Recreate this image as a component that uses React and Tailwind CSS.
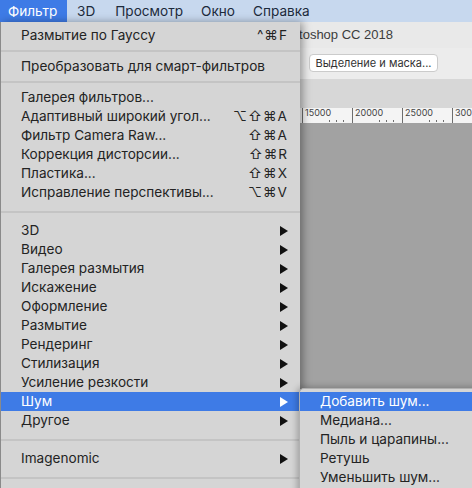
import React from 'react';

const font = { fontFamily: 'Inter, "Noto Sans", "DejaVu Sans", sans-serif' };

const Arrow = ({ white }) => (
  <svg viewBox="0 0 8 10" className="w-[8px] h-[10px]">
    <path d="M0 0 L8 5 L0 10 Z" fill={white ? '#ffffff' : '#111111'} />
  </svg>
);

const Item = ({ label, shortcut, sub, active }) => (
  <div
    className={`h-[19px] flex items-center justify-between pl-[20px] pr-[12px] text-[13.6px] ${
      active ? 'bg-[#3e7be6] text-white' : 'text-[#232323]'
    }`}
  >
    <span className="whitespace-nowrap">{label}</span>
    {shortcut && <span className="tracking-[1px] whitespace-nowrap">{shortcut}</span>}
    {sub && <Arrow white={active} />}
  </div>
);

const Sep = ({ tall }) => (
  <div className={`${tall ? 'h-[19px]' : 'h-[12px]'} flex items-center`}>
    <div className="w-full h-[2px] bg-[#c4c4c4]" />
  </div>
);

const SubItem = ({ label, active }) => (
  <div
    className={`h-[19px] flex items-center pl-[20px] text-[13.6px] whitespace-nowrap ${
      active ? 'bg-[#3e7be6] text-white' : 'text-[#232323]'
    }`}
  >
    {label}
  </div>
);

const RulerSeg = ({ label }) => (
  <div className="w-[50px] shrink-0 h-full border-l border-[#6e6e6e] flex flex-col justify-between pl-[2px]">
    <span className="text-[9px] leading-[10px] text-[#444]">{label}</span>
    <div className="flex gap-[6px] pl-[24px] pb-[1px]">
      <div className="w-px h-[2px] bg-[#6e6e6e]" />
      <div className="w-px h-[2px] bg-[#6e6e6e]" />
      <div className="w-px h-[2px] bg-[#6e6e6e]" />
    </div>
  </div>
);

export default function App() {
  return (
    <div className="relative w-[472px] h-[488px] overflow-hidden bg-[#a2a2a2]" style={font}>
      {/* menu bar */}
      <div className="h-[22px] flex items-center bg-[#c7d8ee] text-[13.6px] text-[#1d2a3b]">
        <div className="h-full flex items-center pl-[8px] w-[67px] bg-[#3e7be6] text-white">Фильтр</div>
        <span className="ml-[10px]">3D</span>
        <span className="ml-[20px]">Просмотр</span>
        <span className="ml-[18px]">Окно</span>
        <span className="ml-[18px]">Справка</span>
      </div>

      {/* app window behind the menu */}
      <div className="flex flex-col h-[466px]">
        <div className="h-[26px] bg-[#e9e9e9] flex items-center pl-[300px]">
          <div className="w-[93px] overflow-hidden flex justify-end">
            <span className="whitespace-nowrap text-[13px] text-[#3c3c3c] font-['Liberation_Sans',sans-serif]">
              Adobe Photoshop CC 2018
            </span>
          </div>
        </div>
        <div className="h-[31px] bg-[#ececec] pl-[309px] pt-[6px]">
          <div className="w-[129px] h-[18px] rounded-[4px] bg-white border border-[#cbcbcb] flex items-center justify-center text-[11px] text-[#333]">
            Выделение и маска...
          </div>
        </div>
        <div className="h-[29px] bg-[#d7d7d7]" />
        <div className="h-[15px] bg-[#f4f4f4] flex pl-[302px] overflow-hidden">
          <RulerSeg label="15000" />
          <RulerSeg label="20000" />
          <RulerSeg label="25000" />
          <div className="w-[20px] shrink-0 h-full border-l border-[#6e6e6e] pl-[2px] overflow-hidden">
            <span className="text-[9px] leading-[10px] text-[#444] block">300</span>
          </div>
        </div>
        <div className="flex-1 bg-[#a2a2a2]" />
      </div>

      {/* Filter menu */}
      <div className="absolute left-0 top-[22px] w-[300px] h-[470px] bg-[#d5d5d5] border-l border-[#8a8a8a] pt-[4px] shadow-[3px_0_8px_rgba(0,0,0,0.35)]">
        <Item label="Размытие по Гауссу" shortcut="^⌘F" />
        <Sep />
        <Item label="Преобразовать для смарт-фильтров" />
        <Sep />
        <Item label="Галерея фильтров..." />
        <Item label="Адаптивный широкий угол..." shortcut="⌥⇧⌘A" />
        <Item label="Фильтр Camera Raw..." shortcut="⇧⌘A" />
        <Item label="Коррекция дисторсии..." shortcut="⇧⌘R" />
        <Item label="Пластика..." shortcut="⇧⌘X" />
        <Item label="Исправление перспективы..." shortcut="⌥⌘V" />
        <Sep tall />
        <Item label="3D" sub />
        <Item label="Видео" sub />
        <Item label="Галерея размытия" sub />
        <Item label="Искажение" sub />
        <Item label="Оформление" sub />
        <Item label="Размытие" sub />
        <Item label="Рендеринг" sub />
        <Item label="Стилизация" sub />
        <Item label="Усиление резкости" sub />
        <Item label="Шум" sub active />
        <Item label="Другое" sub />
        <Sep tall />
        <Item label="Imagenomic" sub />
        <Sep tall />
      </div>

      {/* Noise submenu */}
      <div className="absolute left-[299px] top-[388px] w-[180px] h-[110px] bg-[#d5d5d5] rounded-tl-[5px] border-l border-t border-[#b0b0b0] pt-[3px] shadow-[-2px_-1px_6px_rgba(0,0,0,0.25)]">
        <SubItem label="Добавить шум..." active />
        <SubItem label="Медиана..." />
        <SubItem label="Пыль и царапины..." />
        <SubItem label="Ретушь" />
        <SubItem label="Уменьшить шум..." />
      </div>
    </div>
  );
}
